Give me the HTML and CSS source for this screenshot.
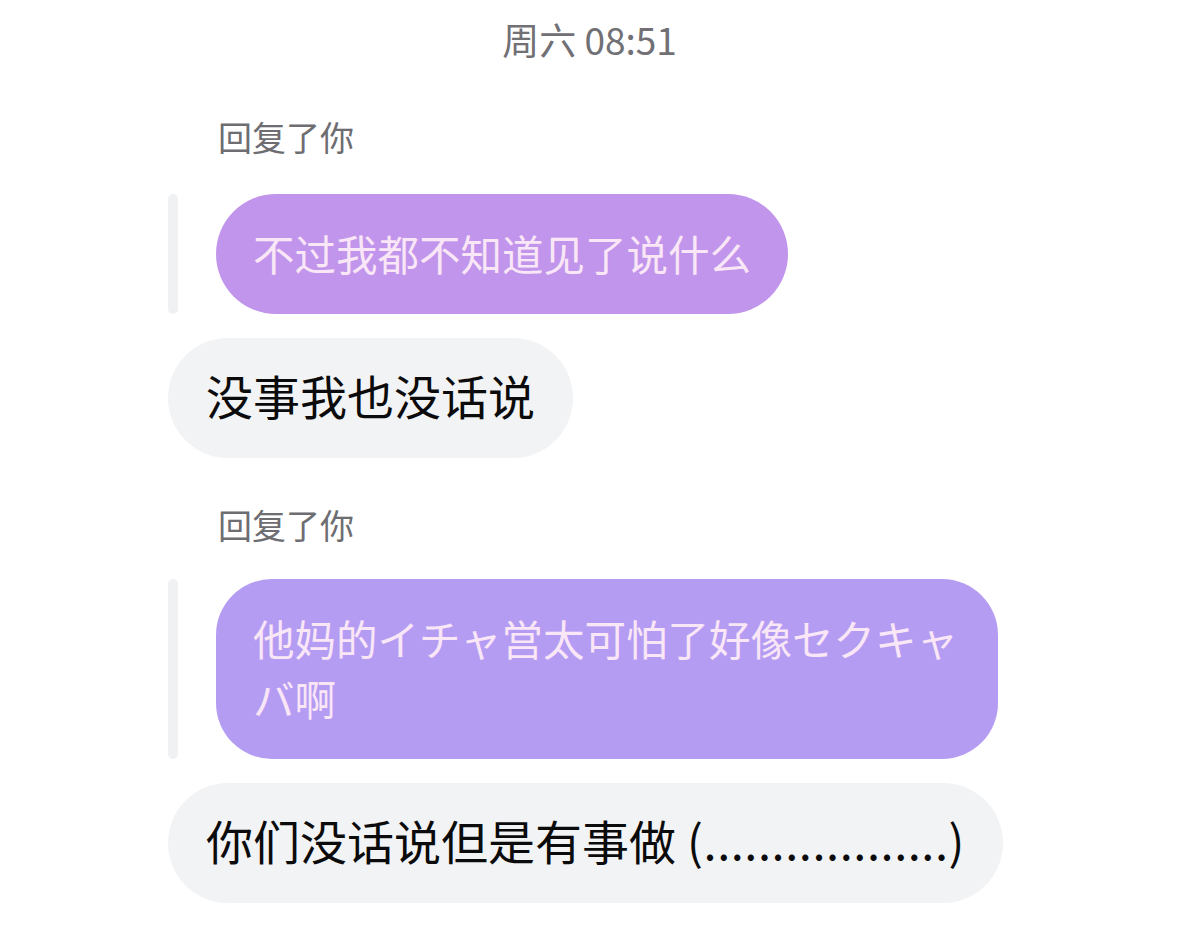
FILE: index.html
```html
<!DOCTYPE html>
<html lang="zh">
<head>
<meta charset="utf-8">
<title>Chat</title>
<link rel="stylesheet" href="styles.css">
</head>
<body>
<div class="chat">
  <div class="timestamp">周六 08:51</div>

  <div class="reply-group first">
    <div class="reply-label">回复了你</div>
    <div class="reply-row">
      <div class="reply-bar"></div>
      <div class="bubble quoted quoted-a">不过我都不知道见了说什么</div>
    </div>
  </div>
  <div class="bubble mine">没事我也没话说</div>

  <div class="reply-group">
    <div class="reply-label">回复了你</div>
    <div class="reply-row">
      <div class="reply-bar"></div>
      <div class="bubble quoted quoted-b">他妈的イチャ営太可怕了好像セクキャバ啊</div>
    </div>
  </div>
  <div class="bubble mine">你们没话说但是有事做<span class="aside"> (..................)</span></div>
</div>
</body>
</html>
```

FILE: styles.css
```css
html, body {
  margin: 0;
  padding: 0;
  background: #ffffff;
}

body {
  font-family: "Noto Sans CJK SC", "Noto Sans", sans-serif;
  width: 1179px;
  height: 943px;
  overflow: hidden;
}

.chat {
  display: flex;
  flex-direction: column;
  align-items: flex-start;
  padding: 14px 0 0 168px;
}

.timestamp {
  align-self: stretch;
  margin-left: -168px;
  text-align: center;
  font-size: 37px;
  line-height: 50px;
  color: #707075;
}

.reply-group {
  display: flex;
  flex-direction: column;
  align-items: flex-start;
  margin-top: 49px;
}

.reply-group.first {
  margin-top: 55px;
}

.reply-label {
  padding-left: 50px;
  font-size: 34px;
  line-height: 40px;
  color: #6d6d72;
  margin-bottom: 32px;
  position: relative;
  top: -2px;
}

.reply-group.first .reply-label {
  margin-bottom: 35px;
}

.reply-row {
  display: flex;
  align-items: stretch;
}

.reply-bar {
  width: 10px;
  border-radius: 5px;
  background: #f0f1f3;
  margin-right: 38px;
  flex: none;
}

.bubble {
  box-sizing: border-box;
  border-radius: 60px;
  padding: 30px 38px;
  line-height: 60px;
}

.quoted {
  font-size: 41.5px;
  color: #f9e6f6;
  padding: 29px 37px 31px;
  max-width: 782px;
}

.quoted-a {
  background: #c195eb;
}

.quoted-b {
  background: #b59cf3;
  border-radius: 56px;
}

.mine {
  margin-top: 24px;
  background: #f2f3f5;
  color: #0b0b0c;
  font-size: 47px;
  white-space: nowrap;
  padding: 27px 38px 33px;
}

.aside {
  letter-spacing: 0.55px;
}
```
